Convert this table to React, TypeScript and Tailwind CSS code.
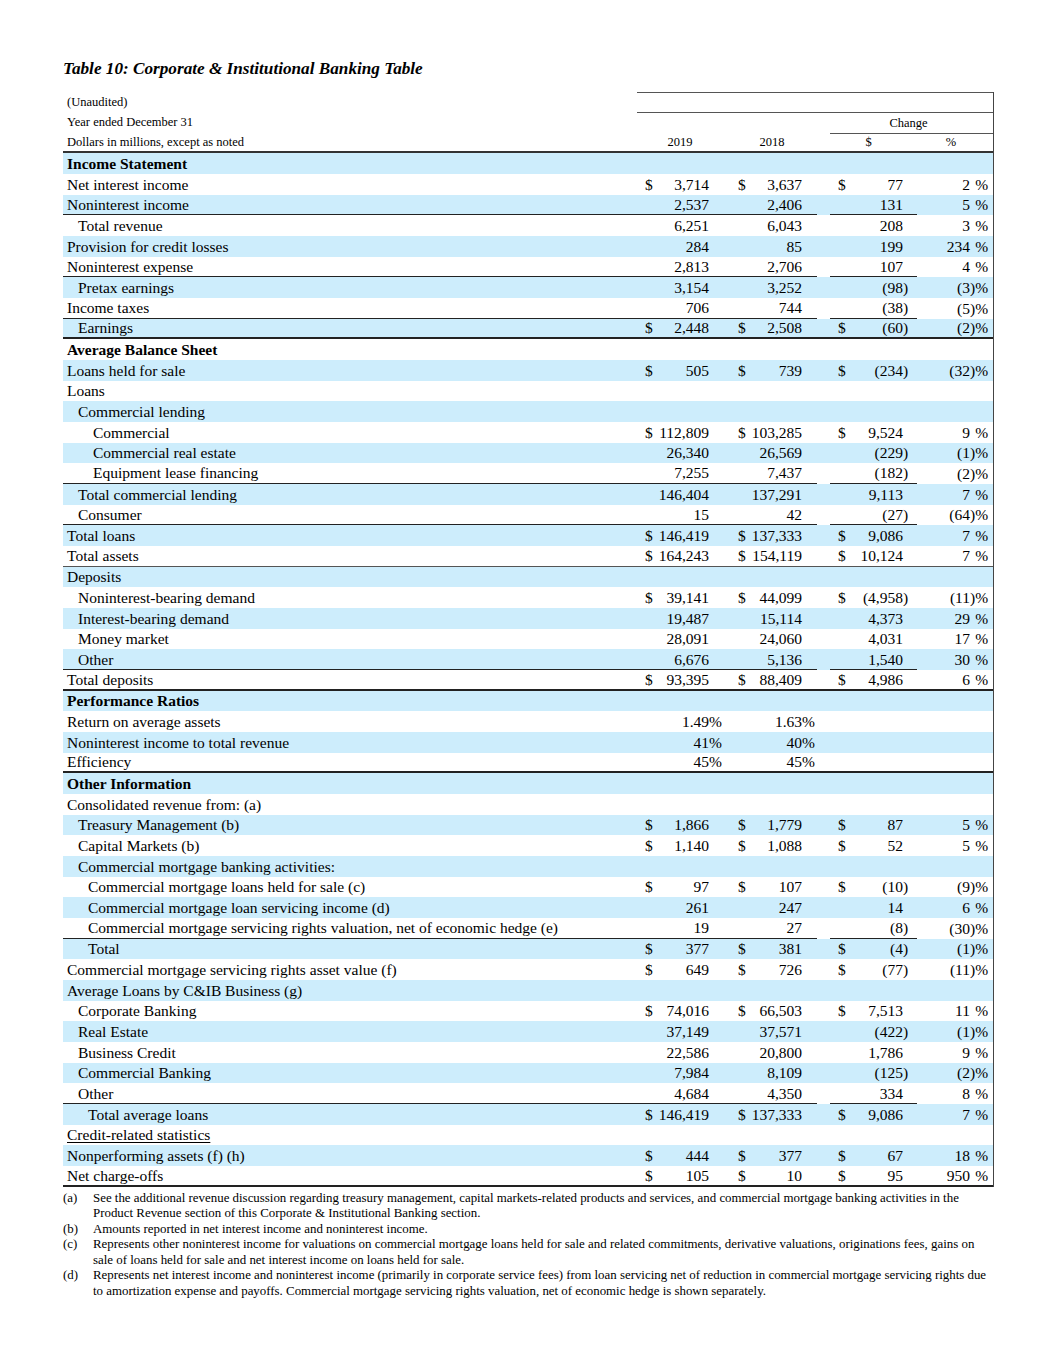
import React from "react";

type Row = {
  l: string;
  ind?: number;
  b?: boolean;
  u?: boolean;
  d?: boolean;
  v?: [string, string, string, string];
  r?: [string, string];
  line?: "sub" | "full" | "thin";
};

const rows: Row[] = [
  { l: "Income Statement", b: true },
  { l: "Net interest income", d: true, v: ["3,714", "3,637", "77", "2"] },
  { l: "Noninterest income", v: ["2,537", "2,406", "131", "5"], line: "sub" },
  { l: "Total revenue", ind: 1, v: ["6,251", "6,043", "208", "3"] },
  { l: "Provision for credit losses", v: ["284", "85", "199", "234"] },
  { l: "Noninterest expense", v: ["2,813", "2,706", "107", "4"], line: "sub" },
  { l: "Pretax earnings", ind: 1, v: ["3,154", "3,252", "(98)", "(3)"] },
  { l: "Income taxes", v: ["706", "744", "(38)", "(5)"], line: "sub" },
  { l: "Earnings", ind: 1, d: true, v: ["2,448", "2,508", "(60)", "(2)"], line: "full" },
  { l: "Average Balance Sheet", b: true },
  { l: "Loans held for sale", d: true, v: ["505", "739", "(234)", "(32)"] },
  { l: "Loans" },
  { l: "Commercial lending", ind: 1 },
  { l: "Commercial", ind: 3, d: true, v: ["112,809", "103,285", "9,524", "9"] },
  { l: "Commercial real estate", ind: 3, v: ["26,340", "26,569", "(229)", "(1)"] },
  { l: "Equipment lease financing", ind: 3, v: ["7,255", "7,437", "(182)", "(2)"], line: "sub" },
  { l: "Total commercial lending", ind: 1, v: ["146,404", "137,291", "9,113", "7"] },
  { l: "Consumer", ind: 1, v: ["15", "42", "(27)", "(64)"], line: "sub" },
  { l: "Total loans", d: true, v: ["146,419", "137,333", "9,086", "7"] },
  { l: "Total assets", d: true, v: ["164,243", "154,119", "10,124", "7"], line: "thin" },
  { l: "Deposits" },
  { l: "Noninterest-bearing demand", ind: 1, d: true, v: ["39,141", "44,099", "(4,958)", "(11)"] },
  { l: "Interest-bearing demand", ind: 1, v: ["19,487", "15,114", "4,373", "29"] },
  { l: "Money market", ind: 1, v: ["28,091", "24,060", "4,031", "17"] },
  { l: "Other", ind: 1, v: ["6,676", "5,136", "1,540", "30"], line: "sub" },
  { l: "Total deposits", d: true, v: ["93,395", "88,409", "4,986", "6"], line: "full" },
  { l: "Performance Ratios", b: true },
  { l: "Return on average assets", r: ["1.49", "1.63"] },
  { l: "Noninterest income to total revenue", r: ["41", "40"] },
  { l: "Efficiency", r: ["45", "45"], line: "full" },
  { l: "Other Information", b: true },
  { l: "Consolidated revenue from: (a)" },
  { l: "Treasury Management (b)", ind: 1, d: true, v: ["1,866", "1,779", "87", "5"] },
  { l: "Capital Markets (b)", ind: 1, d: true, v: ["1,140", "1,088", "52", "5"] },
  { l: "Commercial mortgage banking activities:", ind: 1 },
  { l: "Commercial mortgage loans held for sale (c)", ind: 2, d: true, v: ["97", "107", "(10)", "(9)"] },
  { l: "Commercial mortgage loan servicing income (d)", ind: 2, v: ["261", "247", "14", "6"] },
  { l: "Commercial mortgage servicing rights valuation, net of economic hedge (e)", ind: 2, v: ["19", "27", "(8)", "(30)"], line: "sub" },
  { l: "Total", ind: 2, d: true, v: ["377", "381", "(4)", "(1)"] },
  { l: "Commercial mortgage servicing rights asset value (f)", d: true, v: ["649", "726", "(77)", "(11)"] },
  { l: "Average Loans by C&IB Business (g)" },
  { l: "Corporate Banking", ind: 1, d: true, v: ["74,016", "66,503", "7,513", "11"] },
  { l: "Real Estate", ind: 1, v: ["37,149", "37,571", "(422)", "(1)"] },
  { l: "Business Credit", ind: 1, v: ["22,586", "20,800", "1,786", "9"] },
  { l: "Commercial Banking", ind: 1, v: ["7,984", "8,109", "(125)", "(2)"] },
  { l: "Other", ind: 1, v: ["4,684", "4,350", "334", "8"], line: "sub" },
  { l: "Total average loans", ind: 2, d: true, v: ["146,419", "137,333", "9,086", "7"] },
  { l: "Credit-related statistics", u: true },
  { l: "Nonperforming assets (f) (h)", d: true, v: ["444", "377", "67", "18"] },
  { l: "Net charge-offs", d: true, v: ["105", "10", "95", "950"], line: "full" },
];

const indCls = ["pl-[4px]", "pl-[15px]", "pl-[25px]", "pl-[30px]"];

function splitParen(s: string): [string, boolean] {
  if (s.endsWith(")")) return [s.slice(0, -1), true];
  return [s, false];
}

function Num({
  val,
  dollar,
  pl,
  suffixW,
}: {
  val?: string;
  dollar?: boolean;
  pl: string;
  suffixW: string;
}) {
  if (val === undefined) return null;
  const [main, paren] = splitParen(val);
  return (
    <div className={`flex h-full w-full items-center ${pl}`}>
      <span className="w-[10px]">{dollar ? "$" : ""}</span>
      <span className="flex-1 text-right">{main}</span>
      <span className={`${suffixW} whitespace-nowrap text-left`}>
        <span className={paren ? "" : "invisible"}>)</span>
      </span>
    </div>
  );
}

function Ratio({ val, pl, suffixW }: { val?: string; pl: string; suffixW: string }) {
  if (val === undefined) return null;
  return (
    <div className={`flex h-full w-full items-center ${pl}`}>
      <span className="flex-1 text-right">{val}</span>
      <span className={`${suffixW} text-left`}>%</span>
    </div>
  );
}

function BodyRow({ row, idx }: { row: Row; idx: number }) {
  const bg = idx % 2 === 0 ? "bg-[#cdedfc]" : "bg-white";
  const sub = row.line === "sub" ? "border-b border-[#222]" : "";
  const full =
    row.line === "full"
      ? "border-b-2 border-[#222]"
      : row.line === "thin"
      ? "border-b border-[#555]"
      : "";
  const v = row.v;
  return (
    <div className={`flex h-[20.68px] ${bg} ${full}`}>
      <div className={`flex h-full w-[754px] ${sub}`}>
        <div
          className={`flex h-full w-[574px] items-center ${indCls[row.ind ?? 0]} ${
            row.b ? "font-bold" : ""
          } ${row.u ? "underline underline-offset-2" : ""} whitespace-nowrap`}
        >
          {row.l}
        </div>
        <div className="h-full w-[90px]">
          {row.r ? (
            <Ratio val={row.r[0]} pl="pl-[8px]" suffixW="w-[18px]" />
          ) : (
            <Num val={v?.[0]} dollar={row.d} pl="pl-[8px]" suffixW="w-[18px]" />
          )}
        </div>
        <div className="h-full w-[90px]">
          {row.r ? (
            <Ratio val={row.r[1]} pl="pl-[11px]" suffixW="w-[15px]" />
          ) : (
            <Num val={v?.[1]} dollar={row.d} pl="pl-[11px]" suffixW="w-[15px]" />
          )}
        </div>
      </div>
      <div className="h-full w-[13px]" />
      <div className={`h-full w-[87px] ${sub}`}>
        <Num val={v?.[2]} dollar={row.d} pl="pl-[8px]" suffixW="w-[14px]" />
      </div>
      <div className="h-full w-[76px]">
        {v ? (
          <div className="flex h-full w-full items-center">
            <span className="flex-1 text-right">{splitParen(v[3])[0]}</span>
            <span className="w-[23px] whitespace-nowrap text-left">
              <span className={splitParen(v[3])[1] ? "" : "invisible"}>)</span>%
            </span>
          </div>
        ) : null}
      </div>
    </div>
  );
}

function Note({ k, lines }: { k: string; lines: string[] }) {
  return (
    <div className="flex">
      <div className="w-[30px] shrink-0">{k}</div>
      <div>
        {lines.map((t, i) => (
          <div key={i} className="whitespace-nowrap">
            {t}
          </div>
        ))}
      </div>
    </div>
  );
}

export default function App() {
  return (
    <div
      className="min-h-[1365px] w-[1055px] bg-white text-black"
      style={{ fontFamily: '"Liberation Serif", "Times New Roman", serif' }}
    >
      <div className="pl-[63px] pt-[59px]">
        <div className="h-[20px] text-[17.2px] font-bold italic leading-[20px]">
          Table 10: Corporate &amp; Institutional Banking Table
        </div>
        <div className="mt-[13px] w-[931px] border-r border-[#444]">
          {/* Header */}
          <div className="text-[12.5px]">
            <div className="flex h-[20.4px]">
              <div className="flex w-[574px] items-center pl-[4px]">(Unaudited)</div>
              <div className="w-[356px] border-t border-[#555]" />
            </div>
            <div className="flex h-[20.4px]">
              <div className="flex w-[574px] items-center pl-[4px]">Year ended December 31</div>
              <div className="w-[193px] border-t border-[#555]" />
              <div className="flex w-[163px] items-center justify-center border-t border-[#555] pr-[6px]">
                Change
              </div>
            </div>
            <div className="flex h-[20.4px] border-b-2 border-[#333]">
              <div className="flex w-[574px] items-center pl-[4px]">
                Dollars in millions, except as noted
              </div>
              <div className="flex w-[90px] items-center justify-center pr-[4px]">2019</div>
              <div className="flex w-[90px] items-center justify-center">2018</div>
              <div className="w-[13px]" />
              <div className="flex w-[87px] items-center justify-center border-t border-[#555] pr-[10px]">
                $
              </div>
              <div className="flex w-[76px] items-center justify-center border-t border-[#555] pr-[8px]">
                %
              </div>
            </div>
          </div>
          {/* Body */}
          <div className="text-[15.5px]">
            {rows.map((row, i) => (
              <BodyRow key={i} row={row} idx={i} />
            ))}
          </div>
        </div>
        {/* Footnotes */}
        <div className="mt-[4px] w-[931px] text-[12.9px] leading-[15.5px]">
          <Note
            k="(a)"
            lines={[
              "See the additional revenue discussion regarding treasury management, capital markets-related products and services, and commercial mortgage banking activities in the",
              "Product Revenue section of this Corporate & Institutional Banking section.",
            ]}
          />
          <Note k="(b)" lines={["Amounts reported in net interest income and noninterest income."]} />
          <Note
            k="(c)"
            lines={[
              "Represents other noninterest income for valuations on commercial mortgage loans held for sale and related commitments, derivative valuations, originations fees, gains on",
              "sale of loans held for sale and net interest income on loans held for sale.",
            ]}
          />
          <Note
            k="(d)"
            lines={[
              "Represents net interest income and noninterest income (primarily in corporate service fees) from loan servicing net of reduction in commercial mortgage servicing rights due",
              "to amortization expense and payoffs. Commercial mortgage servicing rights valuation, net of economic hedge is shown separately.",
            ]}
          />
        </div>
      </div>
    </div>
  );
}
